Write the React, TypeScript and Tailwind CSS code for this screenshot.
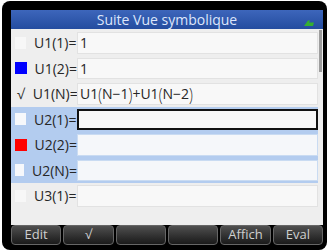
const font = { fontFamily: '"Open Sans", "Noto Sans", sans-serif' };

type Row = {
  mark: 'box' | 'blue' | 'red' | 'check';
  label: string;
  value?: React.ReactNode;
  selected?: boolean;
  editing?: boolean;
};

function Paren({ c }: { c: string }) {
  return <span className="inline-block scale-y-[1.35] font-light">{c}</span>;
}

const rows: Row[] = [
  { mark: 'box', label: 'U1(1)=', value: '1' },
  { mark: 'blue', label: 'U1(2)=', value: '1' },
  {
    mark: 'check',
    label: 'U1(N)=',
    value: (
      <>
        U1<Paren c="(" />N−1<Paren c=")" />+U1<Paren c="(" />N−2<Paren c=")" />
      </>
    ),
  },
  { mark: 'box', label: 'U2(1)=', selected: true, editing: true },
  { mark: 'red', label: 'U2(2)=', selected: true },
  { mark: 'box', label: 'U2(N)=', selected: true },
  { mark: 'box', label: 'U3(1)=' },
];

function Mark({ kind, selected }: { kind: Row['mark']; selected?: boolean }) {
  if (kind === 'check') return <span className="w-[12px] pl-[2px] text-[14px] text-[#333]">√</span>;
  if (kind === 'blue') return <span className="h-[12px] w-[12px] bg-[#0000ff]" />;
  if (kind === 'red') return <span className="h-[12px] w-[12px] bg-[#ff0000]" />;
  return <span className={`h-[12px] w-[11px] ${selected ? 'bg-[#f6f8fb]' : 'bg-[#f7f7f7]'}`} />;
}

function SymbolicRow({ row }: { row: Row }) {
  return (
    <div className={`flex h-[25.5px] items-stretch ${row.selected ? 'bg-[#b3ccef]' : ''}`}>
      <div className="flex w-[66px] items-center gap-[8px] pl-[4px]">
        <Mark kind={row.mark} selected={row.selected} />
        <span className="text-[14px] text-[#262626]">{row.label}</span>
      </div>
      <div
        className={`my-[2px] flex flex-1 items-center pl-[2px] text-[14px] text-[#262626] ${
          row.editing
            ? 'border-2 border-[#111] bg-[#f7f7f7]'
            : row.selected
              ? 'border border-[#c9dbf2] bg-[#f5f7fa]'
              : 'border border-[#e2e2e2] bg-[#f8f8f8]'
        }`}
      >
        {row.value}
      </div>
    </div>
  );
}

const keys = ['Edit', '√', '', '', 'Affich', 'Eval'];

export default function App() {
  return (
    <div className="h-[251px] w-[329px] bg-white pl-[2px] pt-[1px]" style={font}>
      <div className="flex h-[249px] w-[325px] flex-col rounded-[8px] bg-black pb-[5px] pl-[9px] pr-[4px] pt-[9px]">
        <div className="flex flex-1 flex-col bg-[#eeeeee]">
          <div className="relative flex h-[19px] items-center justify-center bg-gradient-to-b from-[#3d66bb] to-[#244c9f] text-[14px] text-[#dde6fb]">
            Suite Vue symbolique
            <svg className="absolute right-[9px] top-[10px]" width="10" height="6" viewBox="0 0 10 6">
              <path d="M0 6 L4 0.5 L6 0.5 L5 2.5 L10 2.5 L9 6 Z" fill="#35b030" />
            </svg>
          </div>
          <div className="flex flex-1">
            <div className="flex flex-1 flex-col pt-[1px]">
              {rows.map((r) => (
                <SymbolicRow key={r.label} row={r} />
              ))}
            </div>
            <div className="w-[5px] pl-[1px] pr-[1px] pt-[1px]">
              <div className="h-[42px] w-[3px] bg-[#9c9c9c]" />
            </div>
          </div>
          <div className="flex h-[20px] gap-[2px] bg-black">
            {keys.map((k, i) => (
              <div
                key={i}
                className="flex flex-1 items-center justify-center rounded-[4px] border border-[#666666] bg-gradient-to-b from-[#505050] to-[#1a1a1a] text-[13px] text-[#cfcfcf]"
              >
                {k}
              </div>
            ))}
          </div>
        </div>
      </div>
    </div>
  );
}
